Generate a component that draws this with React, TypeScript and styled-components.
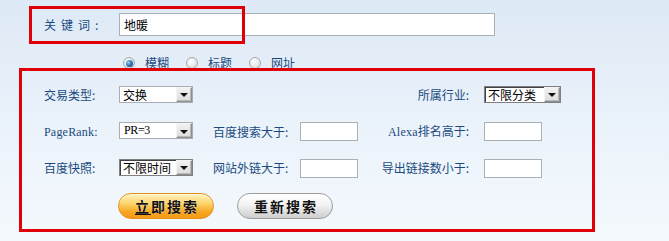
import React from "react";
import styled, { createGlobalStyle } from "styled-components";

const Global = createGlobalStyle`
  html, body { margin: 0; padding: 0; }
  body { background: #f3f8fd; }
`;

const Page = styled.div`
  position: relative;
  width: 669px;
  height: 241px;
  overflow: hidden;
  background: linear-gradient(180deg, #dde9f6 0%, #eaf2fa 50%, #f4f9fd 100%);
  font-family: "Noto Sans CJK SC", "Noto Sans", sans-serif;
  font-size: 12px;
  color: #1a4a80;
`;

const KeywordRow = styled.div`
  display: flex;
  align-items: center;
  padding: 13px 0 0 44px;
  height: 23px;
`;

const KeywordLabel = styled.label`
  width: 75px;
  letter-spacing: 5px;
  line-height: 23px;
`;

const TextBox = styled.input<{ $w: number; $h: number }>`
  box-sizing: border-box;
  width: ${(p) => p.$w}px;
  height: ${(p) => p.$h}px;
  margin: 0;
  padding: 0 4px;
  border: 1px solid #a9b0b6;
  background: #fff;
  font-family: "Noto Sans CJK SC", sans-serif;
  font-size: 12px;
  color: #000;
  outline: none;
`;

const RadioRow = styled.div`
  display: flex;
  align-items: center;
  height: 14px;
  margin-top: 20px;
  padding-left: 123px;
`;

const RadioItem = styled.label`
  display: flex;
  align-items: center;
  margin-right: 17px;
  line-height: 14px;
`;

const RadioDot = styled.span<{ $on?: boolean }>`
  box-sizing: border-box;
  width: 12px;
  height: 12px;
  border-radius: 50%;
  border: 1px solid #a4a9ae;
  background: radial-gradient(circle at 40% 35%, #ffffff 0%, #e4e6e8 60%, #c8ccd0 100%);
  margin-right: 10px;
  display: flex;
  align-items: center;
  justify-content: center;
  &::after {
    content: "";
    display: ${(p) => (p.$on ? "block" : "none")};
    width: 7px;
    height: 7px;
    border-radius: 50%;
    background: radial-gradient(circle at 35% 35%, #9fd0f2 0%, #2b73b2 50%, #0b3f70 100%);
  }
`;

const FormGrid = styled.div`
  display: grid;
  grid-template-columns: 75px 94px 87px 58px 126px auto;
  grid-auto-rows: 20px;
  row-gap: 16.5px;
  margin-top: 15px;
  padding-left: 44px;
  align-items: center;
`;

const Label = styled.span<{ $right?: boolean; $col?: number }>`
  white-space: nowrap;
  line-height: 20px;
  ${(p) => (p.$col ? `grid-column: ${p.$col};` : "")}
  ${(p) => (p.$right ? "text-align: right; padding-right: 15px;" : "")}
`;

const Latin = styled.span`
  font-family: "Liberation Serif", "DejaVu Serif", serif;
  font-size: 12px;
  letter-spacing: 0.2px;
`;

const SelectBox = styled.div<{ $dark?: boolean; $w: number; $col?: number }>`
  ${(p) => (p.$col ? `grid-column: ${p.$col};` : "")}
  box-sizing: border-box;
  width: ${(p) => p.$w}px;
  height: 17px;
  display: flex;
  align-items: center;
  background: #fff;
  border: 1px solid ${(p) => (p.$dark ? "#808080" : "#a8aeb4")};
  ${(p) => (p.$dark ? "box-shadow: inset 1px 1px 0 #404040;" : "")}
  color: #000;
  font-size: 12px;
  position: relative;
  top: -1px;
`;

const SelectText = styled.span<{ $latin?: boolean }>`
  flex: 1;
  padding-left: ${(p) => (p.$latin ? "4px" : "3px")};
  line-height: 15px;
  white-space: nowrap;
  overflow: hidden;
  ${(p) =>
    p.$latin
      ? `font-family: "Liberation Serif", serif; font-size: 12px; letter-spacing: -0.4px;`
      : ""}
`;

const ArrowBtn = styled.span`
  box-sizing: border-box;
  width: 16px;
  height: 15px;
  border: 1px solid #8e8f8f;
  border-top-color: #f4f4f4;
  border-left-color: #f4f4f4;
  box-shadow: inset -1px -1px 0 #b9b9b9;
  background: linear-gradient(180deg, #f2f2f2 0%, #dcdcdc 100%);
  display: flex;
  align-items: center;
  justify-content: center;
  &::after {
    content: "";
    width: 0;
    height: 0;
    border-left: 4px solid transparent;
    border-right: 4px solid transparent;
    border-top: 4px solid #111;
    margin-top: 2px;
  }
`;

const ButtonRow = styled.div`
  display: flex;
  gap: 23px;
  margin-top: 15px;
  padding-left: 118px;
`;

const Btn = styled.button<{ $primary?: boolean }>`
  box-sizing: border-box;
  width: 96px;
  height: 26px;
  border-radius: 13px;
  padding: 0;
  margin: 0;
  font-family: "Noto Sans CJK SC", sans-serif;
  font-weight: 700;
  font-size: 14px;
  letter-spacing: 2px;
  text-indent: 2px;
  color: #111;
  text-shadow: 0 0 1px rgba(255, 255, 255, 0.8);
  cursor: pointer;
  border: 1px solid ${(p) => (p.$primary ? "#e3911d" : "#9c9c9c")};
  background: ${(p) =>
    p.$primary
      ? "linear-gradient(180deg, #fff3c2 0%, #fcd46a 40%, #f7a520 75%, #f49a16 100%)"
      : "linear-gradient(180deg, #ffffff 0%, #f3f3f3 45%, #dadada 80%, #cfcfcf 100%)"};
  box-shadow: ${(p) =>
    p.$primary ? "inset 0 1px 0 #fff7da" : "inset 0 1px 0 #ffffff"};
`;

const Accel = styled.span`
  text-decoration: underline;
  text-underline-offset: 2px;
`;

const Highlight = styled.div<{ $l: number; $t: number; $w: number; $h: number }>`
  position: absolute;
  left: ${(p) => p.$l}px;
  top: ${(p) => p.$t}px;
  width: ${(p) => p.$w}px;
  height: ${(p) => p.$h}px;
  box-sizing: border-box;
  border: 3px solid #e00008;
  pointer-events: none;
`;

function Select({
  value,
  width,
  dark,
  latin,
  col,
}: {
  value: string;
  width: number;
  dark?: boolean;
  latin?: boolean;
  col?: number;
}) {
  return (
    <SelectBox $w={width} $dark={dark} $col={col}>
      <SelectText $latin={latin}>{value}</SelectText>
      <ArrowBtn />
    </SelectBox>
  );
}

export default function App() {
  return (
    <Page>
      <Global />
      <KeywordRow>
        <KeywordLabel>关键词:</KeywordLabel>
        <TextBox $w={376} $h={23} defaultValue="地暖" />
      </KeywordRow>

      <RadioRow>
        <RadioItem>
          <RadioDot $on />
          模糊
        </RadioItem>
        <RadioItem>
          <RadioDot />
          标题
        </RadioItem>
        <RadioItem>
          <RadioDot />
          网址
        </RadioItem>
      </RadioRow>

      <FormGrid>
        <Label>交易类型:</Label>
        <Select value="交换" width={74} />
        <Label $col={5} $right>
          所属行业:
        </Label>
        <Select value="不限分类" width={77} dark col={6} />

        <Label>
          <Latin>PageRank:</Latin>
        </Label>
        <Select value="PR=3" width={74} latin />
        <Label>百度搜索大于:</Label>
        <TextBox $w={58} $h={19} />
        <Label $right>
          <Latin>Alexa</Latin>排名高于:
        </Label>
        <TextBox $w={58} $h={19} />

        <Label>百度快照:</Label>
        <Select value="不限时间" width={74} dark />
        <Label>网站外链大于:</Label>
        <TextBox $w={58} $h={19} />
        <Label $right>导出链接数小于:</Label>
        <TextBox $w={58} $h={19} />
      </FormGrid>

      <ButtonRow>
        <Btn $primary>
          <Accel>立</Accel>即搜索
        </Btn>
        <Btn>重新搜索</Btn>
      </ButtonRow>

      <Highlight $l={29} $t={6} $w={216} $h={38} />
      <Highlight $l={19} $t={68} $w={576} $h={164} />
    </Page>
  );
}
